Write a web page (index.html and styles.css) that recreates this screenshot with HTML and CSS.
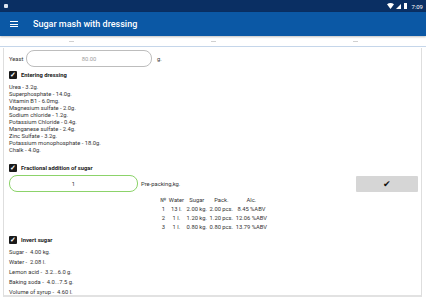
FILE: index.html
```html
<!DOCTYPE html>
<html lang="en">
<head>
  <meta charset="UTF-8">
  <title>Sugar mash with dressing</title>
  <meta name="viewport" content="width=device-width, initial-scale=1.0">
  <link rel="stylesheet" href="styles.css">
</head>
<body>

  <div class="statusbar">
    <span class="notif"></span>
    <div class="status-right">
      <svg width="7" height="6" viewBox="0 0 7 6"><path d="M0 1.2 Q3.5 -1 7 1.2 L3.5 6 Z" fill="#fff"/></svg>
      <svg width="5" height="5" viewBox="0 0 5 5"><path d="M0 5 L5 0 L5 5 Z" fill="#fff"/></svg>
      <span class="battery"></span>
      <span class="clock">7:09</span>
    </div>
  </div>

  <div class="toolbar">
    <div class="menu-icon"><span></span><span></span><span></span></div>
    <div class="title">Sugar mash with dressing</div>
  </div>

  <div class="tabs">
    <span></span><span></span><span></span>
  </div>

  <div class="card">
    <div class="yeast-row">
      <label>Yeast</label>
      <div class="field">80.00</div>
      <span>g.</span>
    </div>

    <div class="check"><span class="box">&#10003;</span>Entering dressing</div>
    <div class="list">
      <div>Urea - 3.2g.</div>
      <div>Superphosphate - 14.0g.</div>
      <div>Vitamin B1 - 6.0mg.</div>
      <div>Magnesium sulfate - 2.0g.</div>
      <div>Sodium chloride - 1.2g.</div>
      <div>Potassium Chloride - 0.4g.</div>
      <div>Manganese sulfate - 2.4g.</div>
      <div>Zinc Sulfate - 3.2g.</div>
      <div>Potassium monophosphate - 18.0g.</div>
      <div>Chalk - 4.0g.</div>
    </div>

    <div class="check frac"><span class="box">&#10003;</span>Fractional addition of sugar</div>
    <div class="frac-row">
      <div class="field green">1</div>
      <span class="unit">Pre-packing,kg.</span>
      <button class="ok-btn">&#10004;</button>
    </div>

    <table class="portions">
      <tr><th>№</th><th>Water</th><th>Sugar</th><th>Pack.</th><th>Alc.</th></tr>
      <tr><td>1</td><td>13 l.</td><td>2.00 kg.</td><td>2.00 pcs.</td><td>8.45 %ABV</td></tr>
      <tr><td>2</td><td>1 l.</td><td>1.20 kg.</td><td>1.20 pcs.</td><td>12.06 %ABV</td></tr>
      <tr><td>3</td><td>1 l.</td><td>0.80 kg.</td><td>0.80 pcs.</td><td>13.79 %ABV</td></tr>
    </table>

    <div class="check invert"><span class="box">&#10003;</span>Invert sugar</div>
    <div class="list wide">
      <div>Sugar - &nbsp;4.00 kg.</div>
      <div>Water - &nbsp;2.08 l.</div>
      <div>Lemon acid - &nbsp;3.2...6.0 g.</div>
      <div>Baking soda - &nbsp;4.0...7.5 g.</div>
      <div>Volume of syrup - &nbsp;4.60 l.</div>
    </div>
  </div>

</body>
</html>
```

FILE: styles.css
```css
/* Base */
body {
  margin: 0;
  width: 426px;
  height: 300px;
  overflow: hidden;
  font-family: Roboto, 'Noto Sans', sans-serif;
  background-color: #fff;
  color: #222;
}

.statusbar {
  height: 12px;
  background-color: #0a2f63;
  display: flex;
  align-items: center;
  justify-content: space-between;
  padding: 0 3px 0 4px;
}

.notif {
  width: 4px;
  height: 4px;
  background-color: #dde4ef;
  border-radius: 1px;
}

.status-right {
  display: flex;
  align-items: center;
  gap: 2px;
}

.battery {
  width: 3px;
  height: 6px;
  background-color: #fff;
  margin: 0 2px 0 1px;
}

.clock {
  color: #fff;
  font-size: 6px;
}

.toolbar {
  height: 24px;
  background-color: #0b58a5;
  display: flex;
  align-items: center;
  box-shadow: 0 1px 2px rgba(0, 0, 0, 0.25);
}

.menu-icon {
  width: 8px;
  margin: 0 15px 0 10px;
  display: flex;
  flex-direction: column;
  gap: 1.5px;
}

.menu-icon span {
  height: 1px;
  background-color: #fff;
}

.title {
  color: #fff;
  font-size: 9px;
  font-weight: 500;
}

.tabs {
  height: 9px;
  display: flex;
  justify-content: space-around;
  align-items: center;
  border-bottom: 1px solid #c5d6ea;
  padding-top: 1px;
}

.tabs span {
  width: 5px;
  height: 1px;
  background-color: #d0d0d0;
}

.card {
  margin: 1px 4px 0 3px;
  height: 247px;
  border: 1px solid #dedede;
  border-top: none;
  border-bottom: 2px solid #e2e2e2;
  padding: 0 5px;
  font-size: 5.8px;
  color: #333;
  overflow: hidden;
}

.yeast-row {
  display: flex;
  align-items: center;
  height: 21px;
}

.yeast-row label {
  width: 17px;
}

.field {
  border: 1px solid #bdbdbd;
  border-radius: 8px;
  height: 17px;
  box-sizing: border-box;
  display: flex;
  align-items: center;
  justify-content: center;
  color: #9e9e9e;
}

.yeast-row .field {
  width: 126px;
  margin-right: 5px;
}

.check {
  display: flex;
  align-items: center;
  font-weight: 700;
  color: #222;
  margin-top: 1px;
  height: 10px;
}

.box {
  width: 8px;
  height: 8px;
  background-color: #1a1a1a;
  border-radius: 1px;
  color: #fff;
  font-size: 7px;
  font-weight: 700;
  line-height: 8px;
  text-align: center;
  margin-right: 4px;
}

.list {
  margin-top: 4px;
  line-height: 7px;
}

.frac {
  margin-top: 9px;
}

.frac-row {
  display: flex;
  align-items: center;
  margin-top: 2px;
}

.field.green {
  width: 129px;
  border: 1.5px solid #8cd36a;
  color: #333;
}

.unit {
  margin-left: 3px;
  flex: 1;
}

.ok-btn {
  width: 62px;
  height: 16px;
  border: none;
  border-radius: 1px;
  background-color: #d6d6d6;
  font-size: 9px;
  color: #111;
  padding: 0;
  margin-right: -2px;
}

.portions {
  margin: 3px 0 0 150px;
  border-collapse: collapse;
  font-size: 5.8px;
}

.portions th,
.portions td {
  font-weight: 400;
  text-align: center;
  padding: 0 1.3px;
  height: 9px;
}

.invert {
  margin-top: 4px;
}

.list.wide {
  margin-top: 2px;
  line-height: 10px;
}
```
